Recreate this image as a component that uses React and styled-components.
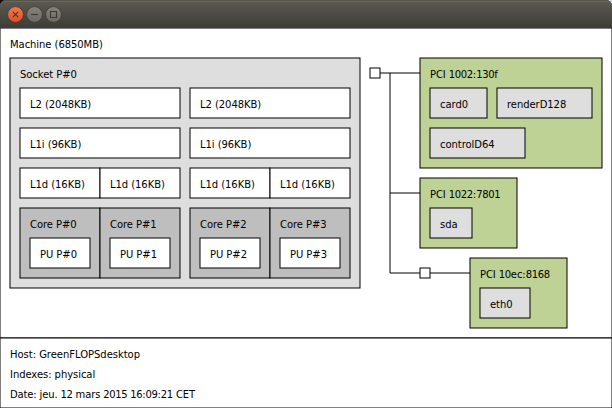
import React from "react";
import styled, { createGlobalStyle } from "styled-components";

const GlobalStyle = createGlobalStyle`
  body {
    margin: 0;
    overflow: hidden;
    background: linear-gradient(90deg, #000 50%, #d8d8d8 50%);
    font: 10px/10px "DejaVu Sans", sans-serif;
    color: #000;
  }
`;

const Window = styled.div`
  display: flex;
  flex-direction: column;
  width: 612px;
  height: 408px;
`;

const TitleBar = styled.header`
  position: relative;
  z-index: 1;
  display: flex;
  align-items: center;
  box-sizing: border-box;
  height: 28px;
  padding: 0 7px;
  border-radius: 6px 6px 0 0;
  background: linear-gradient(#5d5a52, #3d3c37);
  box-shadow: inset 0 1px 0 #55534c, inset 0 2px 0 #68665e;
`;

const Controls = styled.svg`
  display: block;
  width: 56px;
  height: 18px;
`;

/* Outlined area: a one pixel stroke centred on the edge of the fill. */
const Outline = styled.div`
  box-sizing: border-box;
  background: ${(p) => p.$fill || "#fff"};
  box-shadow: 0 0 0 0.5px #000, inset 0 0 0 0.5px #000;
  white-space: nowrap;
`;

const Machine = styled(Outline)`
  height: 310px;
  padding: 10px;
`;

const MachineBody = styled.div`
  display: flex;
  gap: 10px;
  margin-top: 10px;
`;

const Legend = styled(Outline)`
  display: flex;
  flex-direction: column;
  gap: 10px;
  height: 70px;
  padding: 10px;
`;

const Label = styled.div`
  height: 10px;
  padding-top: 2px;
  margin-bottom: -2px;
  letter-spacing: ${(p) => p.$spacing ?? -0.06}px;
`;

const Digits = styled.span`
  letter-spacing: -0.36px;
`;

const Socket = styled(Outline)`
  width: 350px;
  height: 230px;
  padding: 10px;
`;

const Modules = styled.div`
  display: flex;
  gap: 10px;
  margin-top: 10px;
`;

const Module = styled.div`
  display: flex;
  flex-direction: column;
  gap: 10px;
  width: 160px;
`;

const Pair = styled.div`
  display: flex;
`;

const Cell = styled(Outline)`
  width: ${(p) => p.$w}px;
  height: 30px;
  padding: 10px;
`;

const Core = styled(Outline)`
  width: 80px;
  height: 70px;
  padding: 10px;
`;

const Inner = styled.div`
  display: flex;
  flex-wrap: wrap;
  gap: 10px;
  margin-top: 10px;
`;

const Devices = styled.div`
  display: flex;
`;

const Bus = styled.svg`
  display: block;
  flex: none;
  width: 100px;
  height: 270px;
  margin-right: -50px;
  overflow: visible;
`;

const DeviceList = styled.div`
  display: flex;
  flex-direction: column;
  gap: 10px;
`;

const Pci = styled(Outline)`
  width: ${(p) => p.$w}px;
  height: ${(p) => p.$h}px;
  margin-left: ${(p) => p.$indent || 0}px;
  padding: 10px;
`;

const modules = [
  [0, 1],
  [2, 3],
];

const devices = [
  { name: "PCI 1002:130f", w: 182, h: 110, items: [["card0", 57], ["renderD128", 95], ["controlD64", 95]] },
  { name: "PCI 1022:7801", w: 97, h: 70, items: [["sda", 42]] },
  { name: "PCI 10ec:8168", w: 97, h: 70, indent: 50, items: [["eth0", 50]] },
];

/* Sets runs of digits on a six pixel advance. */
const tighten = (text) =>
  text.split(/(\d+)/).map((part, i) => (i % 2 ? <Digits key={i}>{part}</Digits> : part));

function WindowControls() {
  return (
    <Controls viewBox="0 0 56 18">
      <defs>
        <linearGradient id="close" x2="0" y2="1">
          <stop offset="0" stopColor="#f4794e" />
          <stop offset="1" stopColor="#e64e1c" />
        </linearGradient>
        <linearGradient id="plain" x2="0" y2="1">
          <stop offset="0" stopColor="#858379" />
          <stop offset="1" stopColor="#6b6962" />
        </linearGradient>
      </defs>
      <g stroke="#3b3a35" strokeWidth="0.8">
        <circle cx="8.5" cy="9.5" r="7.9" fill="url(#close)" />
        <circle cx="27.5" cy="9.5" r="7.9" fill="url(#plain)" />
        <circle cx="46.5" cy="9.5" r="7.9" fill="url(#plain)" />
      </g>
      <g fill="none" stroke="#3b3a35" strokeWidth="1.1">
        <path d="M5.8 6.8l5.4 5.4M11.2 6.8l-5.4 5.4" />
        <path d="M24 9.5h7" />
        <path d="M43.5 6.5h6v6h-6z" />
      </g>
    </Controls>
  );
}

function BusLines() {
  return (
    <Bus viewBox="0 0 100 270">
      <g fill="none" stroke="#000">
        <path d="M10 15H50" />
        <path d="M20 15V215" />
        <path d="M20 135H50" />
        <path d="M20 215H50" />
        <path d="M60 215H100" />
        <rect x="0" y="10" width="10" height="10" fill="#fff" />
        <rect x="50" y="210" width="10" height="10" fill="#fff" />
      </g>
    </Bus>
  );
}

const Box = ({ w, fill, children }) => (
  <Cell $w={w} $fill={fill}>
    <Label>{children}</Label>
  </Cell>
);

export default function App() {
  return (
    <>
      <GlobalStyle />
      <Window>
        <TitleBar>
          <WindowControls />
        </TitleBar>
        <Machine>
          <Label>Machine (6850MB)</Label>
          <MachineBody>
            <Socket $fill="#dedede">
              <Label>Socket P#0</Label>
              <Modules>
                {modules.map((cores) => (
                  <Module key={cores[0]}>
                    <Box w={160}>L2 (2048KB)</Box>
                    <Box w={160}>L1i (96KB)</Box>
                    <Pair>
                      {cores.map((n) => (
                        <Box key={n} w={80}>L1d (16KB)</Box>
                      ))}
                    </Pair>
                    <Pair>
                      {cores.map((n) => (
                        <Core key={n} $fill="#bebebe">
                          <Label>Core P#{n}</Label>
                          <Inner>
                            <Box w={60}>PU P#{n}</Box>
                          </Inner>
                        </Core>
                      ))}
                    </Pair>
                  </Module>
                ))}
              </Modules>
            </Socket>
            <Devices>
              <BusLines />
              <DeviceList>
                {devices.map((d) => (
                  <Pci key={d.name} $w={d.w} $h={d.h} $indent={d.indent} $fill="#bed295">
                    <Label $spacing={-0.08}>{tighten(d.name)}</Label>
                    <Inner>
                      {d.items.map(([name, w]) => (
                        <Box key={name} w={w} fill="#dedede">{name}</Box>
                      ))}
                    </Inner>
                  </Pci>
                ))}
              </DeviceList>
            </Devices>
          </MachineBody>
        </Machine>
        <Legend>
          <Label $spacing={-0.03}>Host: GreenFLOPSdesktop</Label>
          <Label>Indexes: physical</Label>
          <Label $spacing={-0.14}>{tighten("Date: jeu. 12 mars 2015 16:09:21 CET")}</Label>
        </Legend>
      </Window>
    </>
  );
}
